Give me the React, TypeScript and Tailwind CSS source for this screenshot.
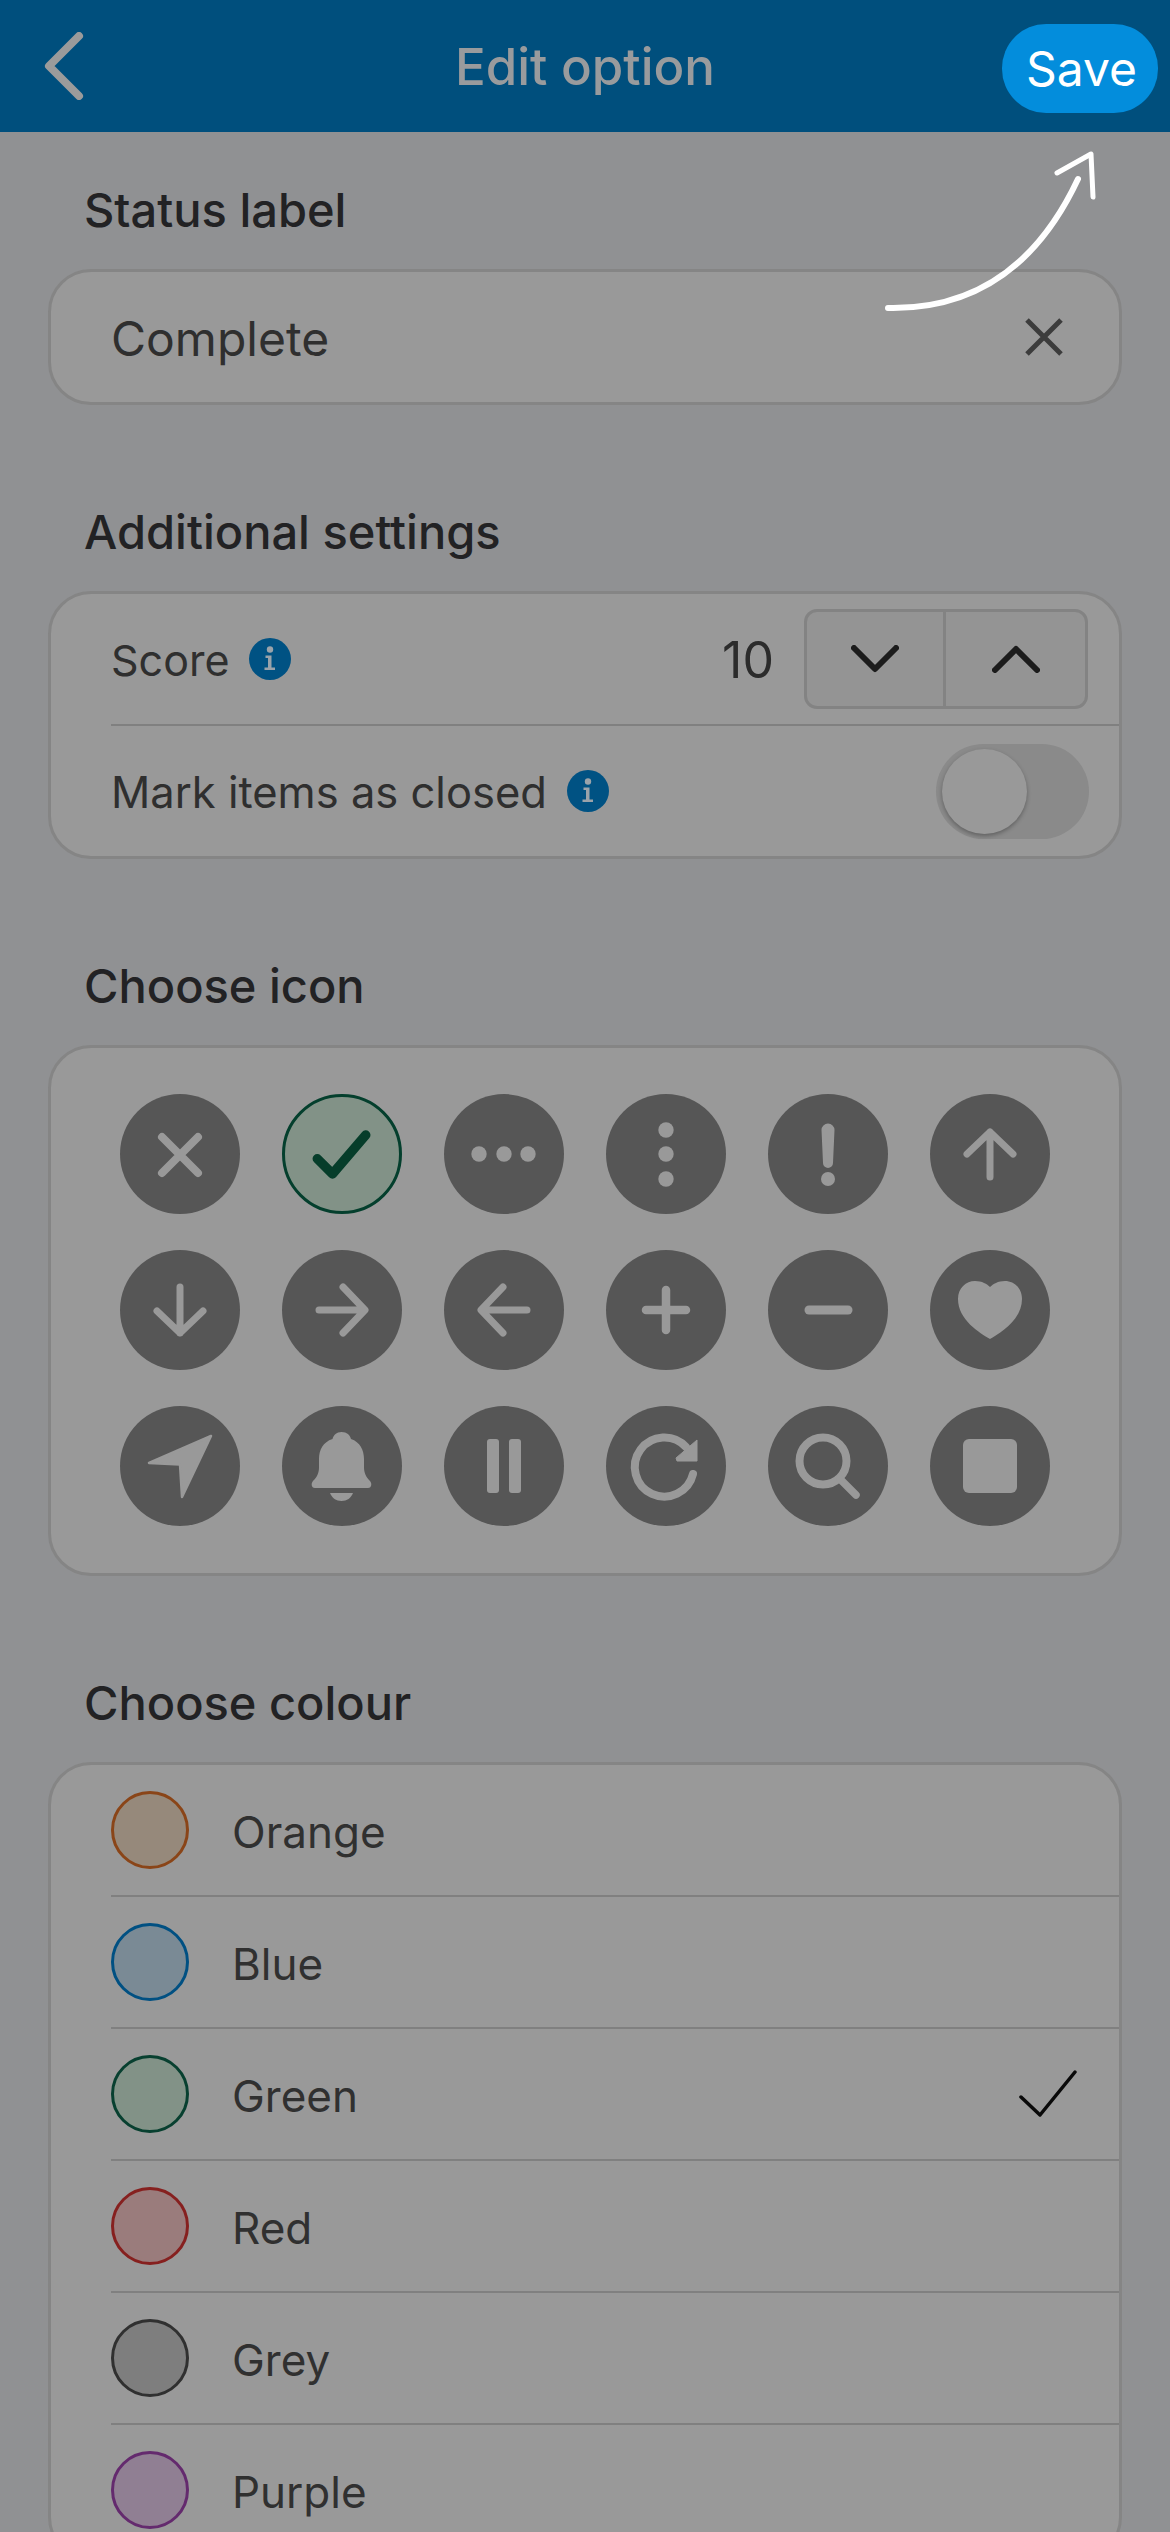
import React from "react";

const glyphs: React.ReactNode[] = [
  <path d="M42 43 78 79M78 43 42 79" fill="none" stroke="currentColor" strokeWidth={8} strokeLinecap="round" />,
  <path d="M34 65 50 81 85 40" fill="none" stroke="currentColor" strokeWidth={10} strokeLinecap="round" strokeLinejoin="round" />,
  <g fill="currentColor"><circle cx={35} cy={60} r={7.7} /><circle cx={60} cy={60} r={7.7} /><circle cx={84} cy={60} r={7.7} /></g>,
  <g fill="currentColor"><circle cx={60} cy={36} r={7.7} /><circle cx={60} cy={60} r={7.7} /><circle cx={60} cy={85} r={7.7} /></g>,
  <g fill="currentColor"><path d="M53.5 36a6.5 6.5 0 0 1 13 0L65 69a5 5 0 0 1-10 0Z" /><circle cx={60} cy={85} r={7} /></g>,
  <path d="M60 83V38M37 60 60 38 83 60" fill="none" stroke="currentColor" strokeWidth={7} strokeLinecap="round" strokeLinejoin="round" />,
  <path d="M60 37V83M37 61 60 83 83 61" fill="none" stroke="currentColor" strokeWidth={7} strokeLinecap="round" strokeLinejoin="round" />,
  <path d="M37 60H82M61 37 83 60 61 83" fill="none" stroke="currentColor" strokeWidth={7} strokeLinecap="round" strokeLinejoin="round" />,
  <path d="M83 60H38M59 37 37 60 59 83" fill="none" stroke="currentColor" strokeWidth={7} strokeLinecap="round" strokeLinejoin="round" />,
  <path d="M60 40V80M40 60H80" fill="none" stroke="currentColor" strokeWidth={8.5} strokeLinecap="round" />,
  <path d="M41 60H80" fill="none" stroke="currentColor" strokeWidth={9} strokeLinecap="round" />,
  <path d="M60 89C50 83 28 70 28 49C28 38 36 31 45 31C52 31 57 34 60 37C63 34 68 31 75 31C84 31 92 38 92 49C92 70 70 83 60 89Z" fill="currentColor" />,
  <path d="M91 30 29 57 60 58.5 62 91Z" fill="currentColor" stroke="currentColor" strokeWidth={2.5} strokeLinejoin="round" />,
  <g fill="currentColor">
    <path d="M59.5 26c-5 0-8 3-9 7C41 36 37 44 37 53v8c0 6-2 10-6 14c-2 2-2 7 2 7h53c4 0 4-5 2-7c-4-4-6-8-6-14v-8c0-9-4-17-13-20c-1-4-4-7-9.5-7Z" />
    <path d="M48 87h23c-2 5-6 8-11.500 8s-9.500-3-11.500-8Z" />
  </g>,
  <g fill="currentColor"><rect x={43} y={33} width={12} height={54} rx={3} /><rect x={65} y={33} width={12} height={54} rx={3} /></g>,
  <g>
    <path d="M80 41A29.500 29.500 0 1 0 87 68" fill="none" stroke="currentColor" strokeWidth={8} strokeLinecap="round" />
    <path d="M91 34V55H71L70 52Z" fill="currentColor" stroke="currentColor" strokeWidth={1} strokeLinejoin="round" />
  </g>,
  <g fill="none" stroke="currentColor" strokeLinecap="round">
    <circle cx={55} cy={55} r={23.5} strokeWidth={8} />
    <path d="M72 73 88 89" strokeWidth={7.500} />
  </g>,
  <rect x={33} y={33} width={54} height={54} rx={6} fill="currentColor" />,
];

const colours = [
  { name: "Orange", swatch: "bg-[#96897b] border-[#8a4518]" },
  { name: "Blue", swatch: "bg-[#7a8a95] border-[#005082]" },
  { name: "Green", swatch: "bg-[#829287] border-[#084030]", selected: true },
  { name: "Red", swatch: "bg-[#9a7c7c] border-[#86201f]" },
  { name: "Grey", swatch: "bg-[#7e7e7e] border-[#303030]" },
  { name: "Purple", swatch: "bg-[#907f93] border-[#642a6e]" },
];

function SectionTitle({ children, className }: { children: React.ReactNode; className: string }) {
  return (
    <h2 className={`pl-[36px] h-[56px] leading-[56px] mb-[31px] text-[47px] font-medium text-[#222224] ${className}`}>
      {children}
    </h2>
  );
}

function Info() {
  return (
    <svg viewBox="0 0 42 42" className="w-[42px] h-[42px] shrink-0">
      <circle cx={21} cy={21} r={21} fill="#005283" />
      <circle cx={21} cy={11.500} r={3.200} fill="#9aa3aa" />
      <path d="M16.500 17.500h6v12H26v2.500H15.500v-2.500H19v-9.500h-2.500Z" fill="#9aa3aa" />
    </svg>
  );
}

export default function App() {
  return (
    <div className="relative w-[1170px] h-[2532px] overflow-hidden bg-[#909193] font-['Inter',sans-serif]">
      <header className="h-[132px] bg-[#004f7d] grid grid-cols-[1fr_auto_1fr] items-center px-[12px] pt-[5px]">
        <svg viewBox="0 0 43 68" className="w-[43px] h-[68px] -mt-[5px] ml-[29px]">
          <path d="M38 4 8 34 38 64" fill="none" stroke="#9b9b9b" strokeWidth={8} strokeLinecap="round" strokeLinejoin="round" />
        </svg>
        <h1 className="text-[51px] font-medium text-[#999b9d] -mt-[3px]">Edit option</h1>
        <button className="justify-self-end w-[156px] h-[89px] pl-[3px] rounded-[44px] bg-[#038ddc] text-white text-[48px]">Save</button>
      </header>

      <main className="pl-[48px] pr-[48px]">
        <SectionTitle className="mt-[50px]">Status label</SectionTitle>
        <div className="h-[136px] rounded-[43px] border-[3px] border-[#858585] bg-[#999999] flex items-center justify-between pl-[60px] pr-[56px]">
          <span className="text-[48px] text-[#2f2f2f] pt-[3px]">Complete</span>
          <svg viewBox="0 0 38 38" className="w-[38px] h-[38px]">
            <path d="M2 2 36 36M36 2 2 36" stroke="#3c3c3c" strokeWidth={5} fill="none" />
          </svg>
        </div>

        <SectionTitle className="mt-[99px]">Additional settings</SectionTitle>
        <div className="h-[268px] rounded-[43px] border-[3px] border-[#858585] bg-[#999999] pl-[60px]">
          <div className="h-[132px] border-b-2 border-[#808080] flex items-center pr-[31px]">
            <span className="text-[43px] text-[#2f2f2f] mr-[20px] pt-[3px]">Score</span>
            <Info />
            <span className="ml-auto text-[50px] text-[#2c2c2c] mr-[30px] pt-[3px]">10</span>
            <div className="w-[284px] h-[100px] rounded-[13px] border-[3px] border-[#838383] bg-[#949494] flex">
              <div className="w-[139px] flex items-center justify-center border-r-[3px] border-[#838383]">
                <svg viewBox="0 0 48 28" className="w-[48px] h-[28px]">
                  <path d="M3 3 24 24 45 3" fill="none" stroke="#1c1c1c" strokeWidth={6} strokeLinecap="round" strokeLinejoin="round" />
                </svg>
              </div>
              <div className="flex-1 flex items-center justify-center">
                <svg viewBox="0 0 48 28" className="w-[48px] h-[28px]">
                  <path d="M3 25 24 4 45 25" fill="none" stroke="#1c1c1c" strokeWidth={6} strokeLinecap="round" strokeLinejoin="round" />
                </svg>
              </div>
            </div>
          </div>
          <div className="h-[130px] flex items-center pr-[30px]">
            <span className="text-[43.500px] text-[#2f2f2f] mr-[20px] pt-[3px]">Mark items as closed</span>
            <Info />
            <div className="ml-auto w-[153px] h-[95px] rounded-full bg-[#8a8a8a] flex items-center pl-[6px]">
              <div className="w-[85px] h-[85px] rounded-full bg-[#999999] shadow-[0_2px_4px_rgba(0,0,0,0.3)]" />
            </div>
          </div>
        </div>

        <SectionTitle className="mt-[99px]">Choose icon</SectionTitle>
        <div className="h-[531px] rounded-[43px] border-[3px] border-[#858585] bg-[#999999] pl-[69px] pt-[46px] grid grid-cols-[repeat(6,120px)] grid-rows-[repeat(3,120px)] gap-x-[42px] gap-y-[36px]">
          {glyphs.map((glyph, i) =>
            i === 1 ? (
              <svg key={i} viewBox="0 0 120 120" className="w-[120px] h-[120px] rounded-full bg-[#829287] border-[3px] border-[#043f2d] text-[#063d2a]">
                {glyph}
              </svg>
            ) : (
              <svg key={i} viewBox="0 0 120 120" className="w-[120px] h-[120px] rounded-full bg-[#565656] text-[#999999]">
                {glyph}
              </svg>
            ),
          )}
        </div>

        <SectionTitle className="mt-[99px]">Choose colour</SectionTitle>
        <div className="rounded-[43px] border-[3px] border-[#858585] bg-[#999999] pl-[60px]">
          {colours.map((c) => (
            <div key={c.name} className="h-[132px] border-b-2 border-[#808080] flex items-center pr-[42px]">
              <span className={`w-[78px] h-[78px] rounded-full border-[3px] mr-[43px] ${c.swatch}`} />
              <span className="text-[44px] text-[#303030] pt-[3px]">{c.name}</span>
              {c.selected && (
                <svg viewBox="0 0 58 48" className="ml-auto w-[58px] h-[48px]">
                  <path d="M2 27 21 45 56 2" fill="none" stroke="#0a0a0a" strokeWidth={3.500} strokeLinecap="round" strokeLinejoin="round" />
                </svg>
              )}
            </div>
          ))}
        </div>
      </main>

      {/* Hand-drawn pointer towards the Save button */}
      <svg viewBox="0 0 240 190" className="absolute left-[870px] top-[140px] w-[240px] h-[190px]">
        <path d="M18 168C110 170 170 120 208 39" fill="none" stroke="#ffffff" strokeWidth={6} strokeLinecap="round" />
        <path d="M187 33 221 14 223 57" fill="none" stroke="#ffffff" strokeWidth={5} strokeLinecap="round" strokeLinejoin="round" />
      </svg>
    </div>
  );
}
